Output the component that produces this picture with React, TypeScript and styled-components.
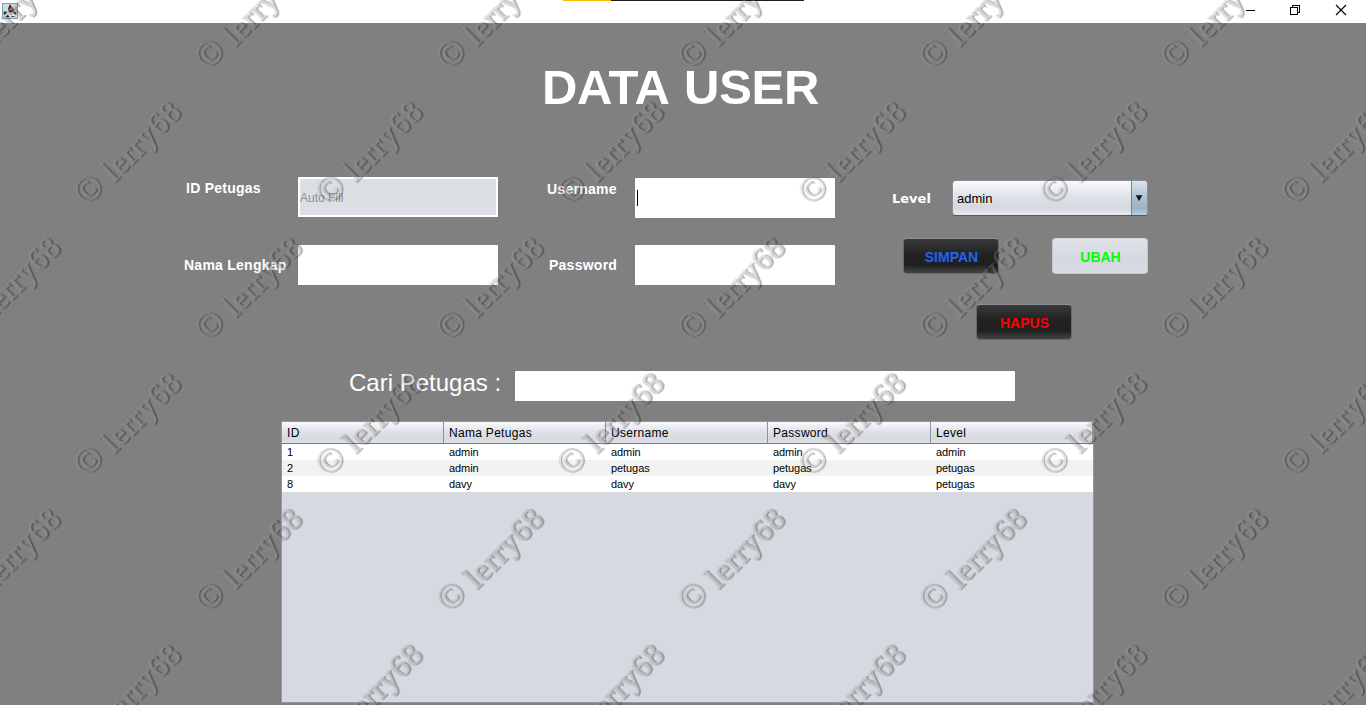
import React from 'react';
import styled, { createGlobalStyle } from 'styled-components';

const Global = createGlobalStyle`
  * { box-sizing: border-box; }
  body { margin: 0; overflow: hidden; font-family: "Liberation Sans", Arial, sans-serif; }
`;

const Window = styled.div`
  position: relative;
  width: 1366px;
  height: 705px;
  background: #808080;
  display: flex;
  flex-direction: column;
  overflow: hidden;
`;

const TitleBar = styled.header`
  height: 23px;
  flex: none;
  background: #fff;
  display: flex;
  align-items: flex-start;
`;

const AppIcon = styled.svg`
  width: 16px;
  height: 16px;
  margin: 3px 0 0 2px;
`;

const TopStrip = styled.div`
  width: 241px;
  height: 1px;
  margin-left: 545px;
  background: linear-gradient(90deg, #ffb900 48px, #1f1b20 48px);
`;

const WindowControls = styled.svg`
  width: 120px;
  height: 23px;
  margin-left: auto;
`;

const Title = styled.h1`
  margin: 35px 0 0 542px;
  height: 58px;
  line-height: 58px;
  font-size: 49px;
  font-weight: 700;
  letter-spacing: -0.3px;
  word-spacing: 3px;
  color: #fff;
  white-space: nowrap;
`;

const Form = styled.form`
  display: flex;
  align-items: flex-start;
  margin-top: 61px;
  height: 194px;
  padding-left: 184px;
`;

const Fields = styled.div<{ $labels: number; $gap: number; $width: number; $top: number }>`
  display: grid;
  grid-template-columns: ${(p) => p.$labels}px 200px;
  grid-template-rows: 40px 40px;
  row-gap: ${(p) => p.$gap}px;
  width: ${(p) => p.$width}px;
  padding-top: ${(p) => p.$top}px;
  flex: none;
`;

const Label = styled.label<{ $indent?: number; $drop?: number; $verdana?: boolean }>`
  color: #fff;
  font-size: 14px;
  line-height: 16px;
  font-weight: 700;
  white-space: nowrap;
  padding-left: ${(p) => p.$indent ?? 0}px;
  padding-top: ${(p) => p.$drop ?? 0}px;
  letter-spacing: 0.25px;
  ${(p) => p.$verdana && 'font-family: "DejaVu Sans", Verdana, sans-serif; font-size: 13px; letter-spacing: 0;'}
`;

const Input = styled.div<{ $disabled?: boolean }>`
  height: 40px;
  background: ${(p) => (p.$disabled ? '#dce0e5' : '#fff')};
  border: 2px solid #fff;
  border-radius: 1px 1px 0 0;
  color: #8e8f91;
  font-size: 12px;
  padding-top: ${(p) => (p.$disabled ? 1 : 0)}px;
  display: flex;
  align-items: center;
`;

const Caret = styled.span`
  width: 1px;
  height: 16px;
  background: #000;
`;

const Actions = styled.div`
  display: flex;
  flex-direction: column;
  width: 256px;
  padding-top: 3px;
`;

const LevelRow = styled.div`
  display: flex;
  height: 36px;
`;

const LevelLabel = styled.div`
  width: 60px;
  flex: none;
`;

const Select = styled.div`
  width: 196px;
  height: 36px;
  border: 1px solid #8a8d96;
  border-bottom-color: #46586c;
  border-radius: 4px;
  background: linear-gradient(#fafafc, #dfe2e8 45%, #d5d8e0 80%, #e8ebf2);
  display: flex;
  overflow: hidden;
  justify-content: space-between;
  color: #000;
  font-size: 13px;
  line-height: 35px;
  padding-left: 4px;
`;

const Arrow = styled.svg`
  width: 16px;
  height: 34px;
  flex: none;
  border-left: 1px solid #6e8599;
  background: linear-gradient(#dce6ee, #afc2d2 45%, #9db2c4 80%, #bad0e2);
`;

const ButtonRow = styled.div<{ $top: number; $left: number; $gap?: number }>`
  display: flex;
  gap: ${(p) => p.$gap ?? 0}px;
  padding: ${(p) => p.$top}px 0 0 ${(p) => p.$left}px;
`;

const Button = styled.button<{ $color: string; $light?: boolean }>`
  width: 96px;
  height: 36px;
  padding: 1px 0 0 1px;
  border-radius: 4px;
  border: 1px solid ${(p) => (p.$light ? '#c3c7cf' : '#66686b')};
  border-top-color: ${(p) => (p.$light ? '#d4d7dd' : '#8c9095')};
  background: ${(p) =>
    p.$light
      ? 'linear-gradient(#e0e2e8, #d5d8e0 60%, #d9dce4)'
      : 'linear-gradient(#393939, #222 45%, #1f1f1f 75%, #444)'};
  color: ${(p) => p.$color};
  font: 700 14px "Liberation Sans", Arial, sans-serif;
`;

const Search = styled.div`
  display: flex;
  height: 30px;
  padding-left: 349px;
  flex: none;
`;

const SearchLabel = styled.div`
  width: 166px;
  color: #fff;
  font-size: 24px;
  line-height: 24px;
  white-space: nowrap;
`;

const SearchInput = styled.div`
  width: 500px;
  height: 30px;
  background: #fff;
  border-radius: 1px 1px 0 0;
`;

const TablePane = styled.div`
  width: 813px;
  height: 282px;
  flex: none;
  margin: 20px 0 0 281px;
  border: 1px solid #9297a1;
  background: #d6d9e0;
`;

const Row = styled.div<{ $alt?: boolean }>`
  display: grid;
  grid-template-columns: 162px 162px 162px 163px 162px;
  height: 16px;
  background: ${(p) => (p.$alt ? '#f2f2f2' : '#fff')};
  font-size: 11px;
  letter-spacing: -0.08px;
  line-height: 17px;
  color: #000;
  & > span { padding-left: 5px; }
`;

const HeadRow = styled(Row)`
  height: 22px;
  font-size: 12px;
  letter-spacing: 0.3px;
  line-height: 22px;
  background: linear-gradient(#fafafc, #dfe2e8 45%, #d6d9e0 80%, #e0e3ea);
  border-bottom: 1px solid #747880;
  & > span { height: 21px; border-right: 1px solid #8f939d; }
`;

const Watermark = styled.svg`
  position: absolute;
  inset: 0;
  pointer-events: none;
  font-family: "Liberation Serif", "Times New Roman", serif;
`;

const records = [
  ['1', 'admin', 'admin', 'admin', 'admin'],
  ['2', 'admin', 'petugas', 'petugas', 'petugas'],
  ['8', 'davy', 'davy', 'davy', 'petugas'],
];
const headings = ['ID', 'Nama Petugas', 'Username', 'Password', 'Level'];

const marks: { x: number; y: number }[] = [];
for (let row = 0; row < 6; row++) {
  for (let col = -1; col < 6; col++) {
    const x = (row % 2 ? 90.5 : 211.5) + col * 241.4;
    const y = 54 + row * 135.7;
    if (x > -95 && x < 1380) marks.push({ x, y });
  }
}

function Stamp({ x, y }: { x: number; y: number }) {
  return (
    <g transform={`translate(${x} ${y}) rotate(-45)`}>
      <text x="-13.3" y="11" fontSize="35" strokeWidth="0.2">©</text>
      <text x="22.5" y="12.5" fontSize="31.5" letterSpacing="1.1" strokeWidth="0.9">lerry68</text>
    </g>
  );
}

export default function App() {
  return (
    <>
      <Global />
      <Window>
        <TitleBar>
          <AppIcon viewBox="0 0 16 16">
            <rect x=".5" y=".5" width="15" height="15" fill="#cfdce8" stroke="#7f9db5" />
            <path d="M2 11.5l3-2.500h6l3 2.500-1 2.500H3z" fill="#efefef" stroke="#999" strokeWidth=".4" />
            <path d="M1.5 8.5h3l.5 2-3 1.500zM11.500 8.500l3 .5-.5 3-3-1.500z" fill="#333" />
            <path d="M8 1l1.500 2.500L12.500 7 10.500 9.500 7 9 6 5.500z" fill="#292929" />
            <circle cx="9" cy="6" r="1.7" fill="#df3b2c" />
            <path d="M3 14l2.500-2 2.500 2zM9.500 12.500l4 1.500h-4z" fill="#333" />
          </AppIcon>
          <TopStrip />
          <WindowControls viewBox="0 0 120 23" fill="none" stroke="#000" shapeRendering="crispEdges">
            <path d="M-1 10.5h10M44.5 7.5h7v7h-7zM46.5 7.5v-2h7v7h-2" />
            <path d="M90 5l10 10M100 5l-10 10" strokeWidth="1.1" shapeRendering="auto" />
          </WindowControls>
        </TitleBar>
        <Title>DATA USER</Title>
        <Form>
          <Fields $labels={114} $gap={28} $width={363} $top={0}>
            <Label $indent={2} $drop={3}>ID Petugas</Label>
            <Input $disabled>Auto Fill</Input>
            <Label $drop={12}>Nama Lengkap</Label>
            <Input />
          </Fields>
          <Fields $labels={88} $gap={27} $width={345} $top={1}>
            <Label $drop={3}>Username</Label>
            <Input><Caret /></Input>
            <Label $indent={2} $drop={12}>Password</Label>
            <Input />
          </Fields>
          <Actions>
            <LevelRow>
              <LevelLabel><Label as="div" $drop={11} $verdana>Level</Label></LevelLabel>
              <Select>
                admin
                <Arrow viewBox="0 0 16 34"><path d="M4 14h7l-3.5 6.5z" fill="#111" /></Arrow>
              </Select>
            </LevelRow>
            <ButtonRow $top={22} $left={11} $gap={53}>
              <Button type="button" $color="#1e64f5">SIMPAN</Button>
              <Button type="button" $color="#00ff00" $light>UBAH</Button>
            </ButtonRow>
            <ButtonRow $top={30} $left={84}>
              <Button type="button" $color="#ff0000">HAPUS</Button>
            </ButtonRow>
          </Actions>
        </Form>
        <Search>
          <SearchLabel>Cari Petugas :</SearchLabel>
          <SearchInput />
        </Search>
        <TablePane>
          <HeadRow>{headings.map((h) => <span key={h}>{h}</span>)}</HeadRow>
          {records.map((cells, i) => (
            <Row key={cells[0]} $alt={i % 2 === 1}>
              {cells.map((c, j) => <span key={j}>{c}</span>)}
            </Row>
          ))}
        </TablePane>
        <Watermark width="1366" height="705">
          <defs>
            <filter id="emboss" filterUnits="userSpaceOnUse" x="0" y="0" width="1366" height="705" colorInterpolationFilters="sRGB">
              <feOffset in="SourceAlpha" dx="-2" dy="-0.4" result="face" />
              <feOffset in="SourceAlpha" dx="0.4" dy="0.4" result="shade" />
              <feComposite in="shade" in2="face" operator="arithmetic" k1="-0.85" k2="1" k3="0" k4="0" result="edge" />
              <feFlood floodColor="#000" floodOpacity="0.32" />
              <feComposite in2="edge" operator="in" result="dark" />
              <feFlood floodColor="#a0a0a0" floodOpacity="0.3" />
              <feComposite in2="face" operator="in" result="light" />
              <feMerge result="both">
                <feMergeNode in="light" />
                <feMergeNode in="dark" />
              </feMerge>
              <feGaussianBlur in="both" stdDeviation="0.35" />
            </filter>
          </defs>
          <g filter="url(#emboss)" stroke="#000">
            {marks.map((m, i) => <Stamp key={i} {...m} />)}
          </g>
        </Watermark>
      </Window>
    </>
  );
}
